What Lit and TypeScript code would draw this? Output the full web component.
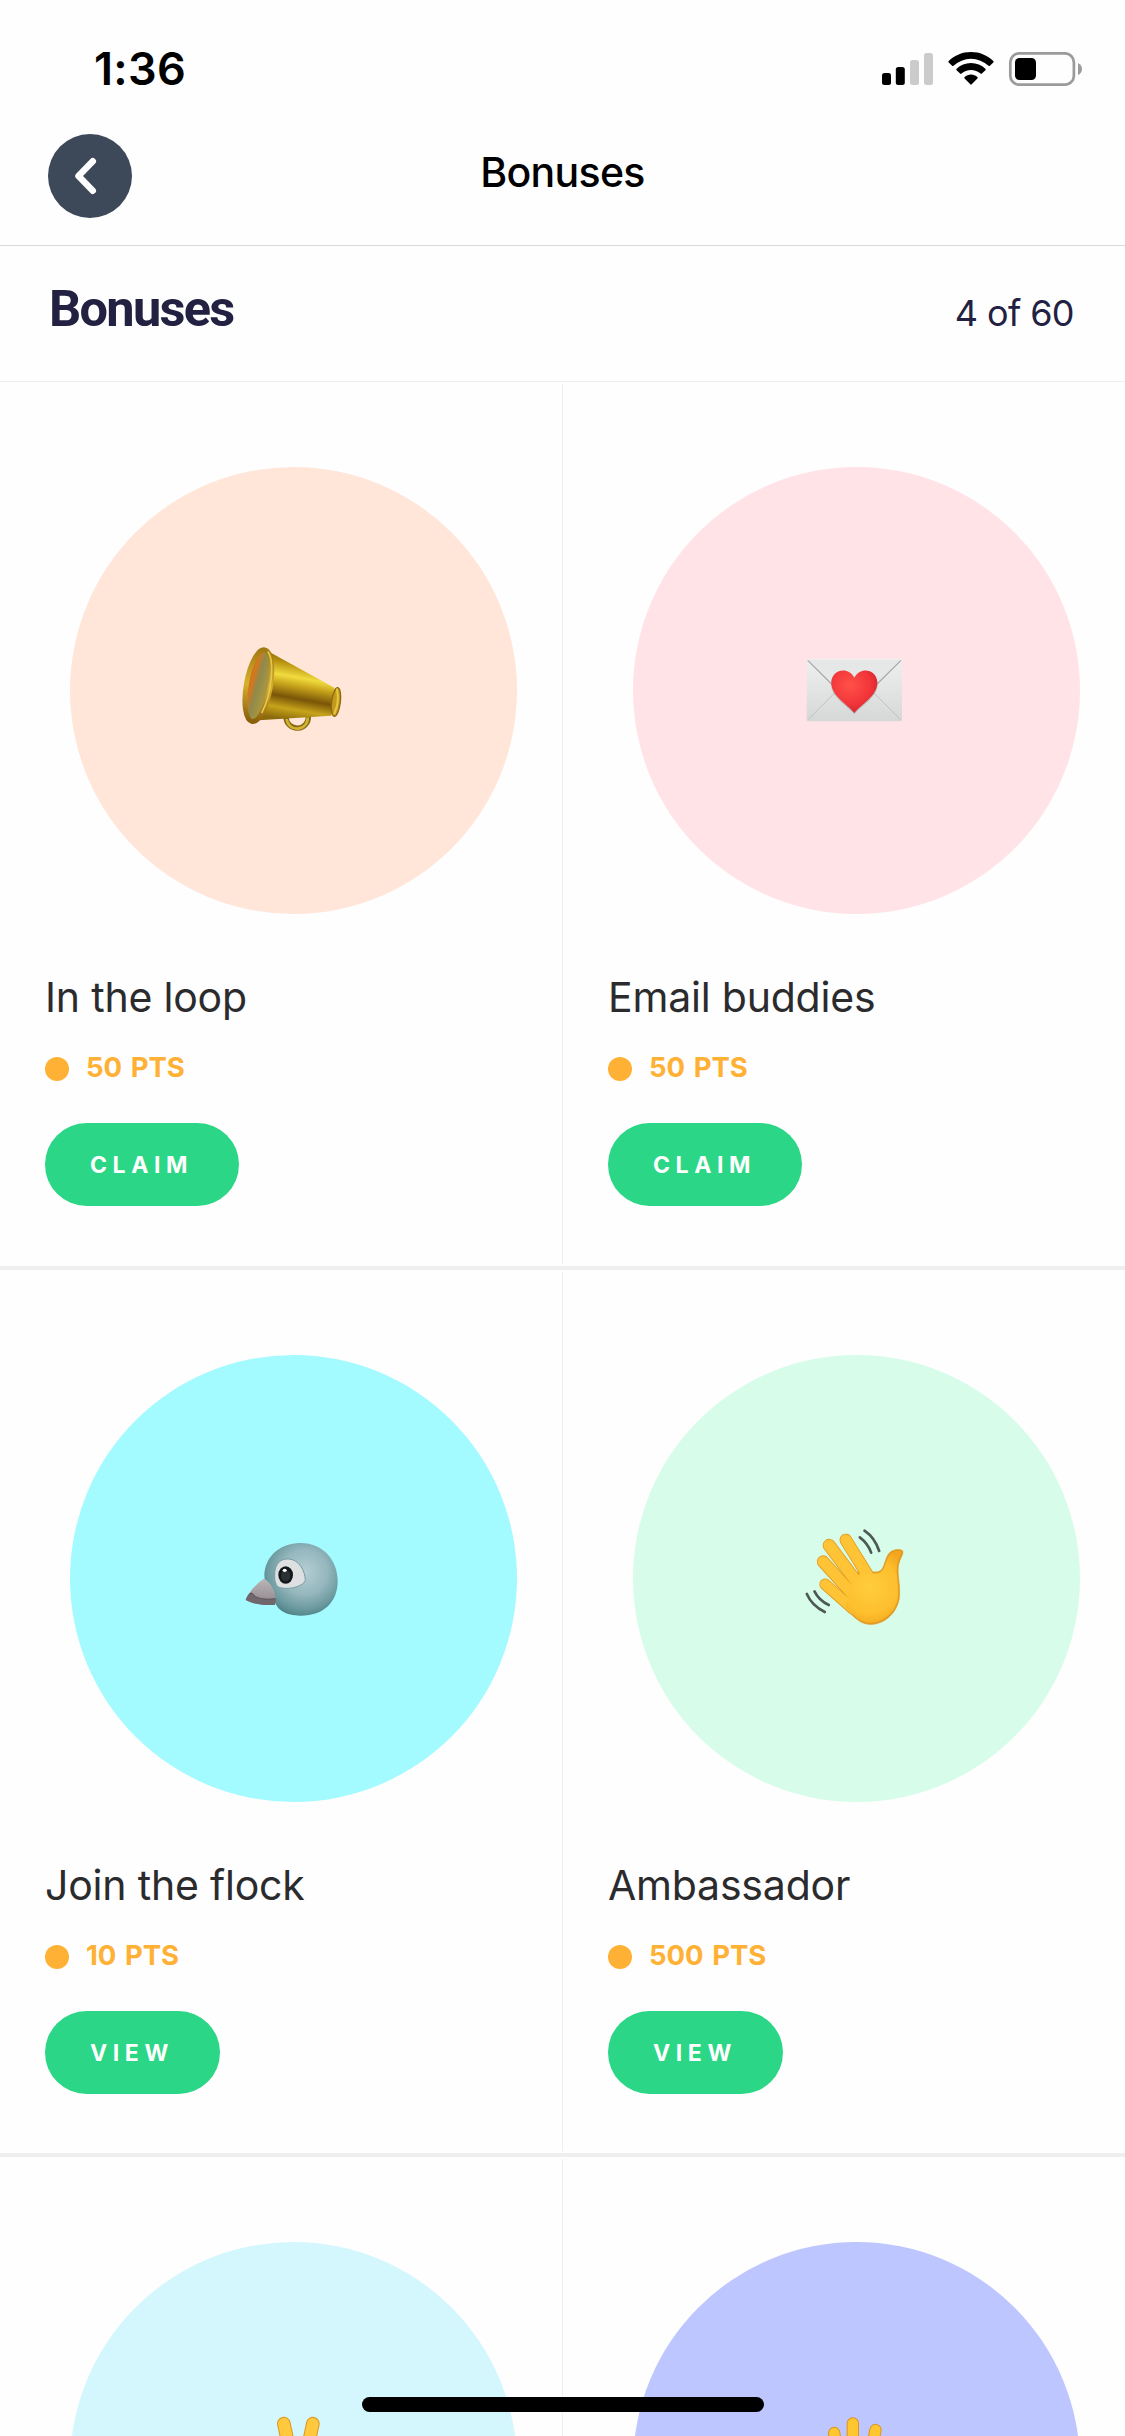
import { LitElement, html, svg, css } from "lit";
import { customElement, property } from "lit/decorators.js";

type IconName = "megaphone" | "letter" | "bird" | "wave" | "victory" | "raised";

interface Bonus {
  title: string;
  points: string;
  action: string;
  tone: string;
  icon: IconName;
}

const rows: Bonus[][] = [
  [
    { title: "In the loop", points: "50 PTS", action: "CLAIM", tone: "peach", icon: "megaphone" },
    { title: "Email buddies", points: "50 PTS", action: "CLAIM", tone: "pink", icon: "letter" },
  ],
  [
    { title: "Join the flock", points: "10 PTS", action: "VIEW", tone: "cyan", icon: "bird" },
    { title: "Ambassador", points: "500 PTS", action: "VIEW", tone: "mint", icon: "wave" },
  ],
  [
    { title: "", points: "", action: "", tone: "sky", icon: "victory" },
    { title: "", points: "", action: "", tone: "violet", icon: "raised" },
  ],
];

const palmShape = "M212 160C235 172 252 172 264 170C282 166 282 140 293 120C302 104 326 100 337 107C343 117 326 132 324 158C322 184 332 216 327 252C318 300 276 331 236 328C206 325 190 304 160 276L168 238L184 196Z";

const icons = {
  megaphone: {
    box: "10 -13 390 390",
    art: svg`
      <defs>
        <linearGradient id="cone" x1="0.6" y1="0" x2="0.4" y2="1">
          <stop offset="0" stop-color="#6f5206"/><stop offset=".2" stop-color="#b8920f"/>
          <stop offset=".38" stop-color="#f0dc3e"/><stop offset=".5" stop-color="#c9a51c"/>
          <stop offset=".68" stop-color="#7a5508"/><stop offset=".84" stop-color="#c7a41a"/>
          <stop offset="1" stop-color="#8c6a0c"/>
        </linearGradient>
        <linearGradient id="bell" x1="0" y1=".2" x2="1" y2=".5">
          <stop offset="0" stop-color="#a86c10"/><stop offset=".25" stop-color="#d9761c"/>
          <stop offset=".5" stop-color="#8f8a4a"/><stop offset="1" stop-color="#b49a3e"/>
        </linearGradient>
        <linearGradient id="rim" x1="0" y1="0" x2="0" y2="1">
          <stop offset="0" stop-color="#a27a12"/><stop offset=".5" stop-color="#d7b02c"/><stop offset="1" stop-color="#8a5f0c"/>
        </linearGradient>
      </defs>
      <path d="M181 262A32 32 0 0 0 248 258" fill="none" stroke="#85680e" stroke-width="16"/>
      <path d="M183 266A31 31 0 0 0 246 261" fill="none" stroke="#d2b235" stroke-width="8"/>
      <path d="M130 64L326 172Q340 215 316 256L100 270Z" fill="url(#cone)"/>
      <g transform="rotate(10 98 166)">
        <ellipse cx="98" cy="166" rx="36" ry="109" fill="url(#bell)" stroke="url(#rim)" stroke-width="15"/>
        <path d="M108 60A36 110 0 0 1 122 245" fill="none" stroke="#e6c74c" stroke-width="5"/>
      </g>
      <ellipse cx="331" cy="215" rx="13" ry="43" fill="#c39a1e" stroke="#8c6a10" stroke-width="4" transform="rotate(7 331 215)"/>
      <path d="M334 177Q342 215 326 250" fill="none" stroke="#e6c63d" stroke-width="6" stroke-linecap="round"/>`,
  },
  letter: {
    box: "7 -40 390 390",
    art: svg`
      <defs>
        <linearGradient id="paper" x1="0" y1="0" x2="0" y2="1">
          <stop offset="0" stop-color="#efefef"/><stop offset="1" stop-color="#d6d8d8"/>
        </linearGradient>
        <radialGradient id="heart" cx=".4" cy=".35" r=".75">
          <stop offset="0" stop-color="#ff5148"/><stop offset=".6" stop-color="#f2353a"/><stop offset="1" stop-color="#c92128"/>
        </radialGradient>
      </defs>
      <rect x="51" y="59" width="286" height="187" rx="3" fill="url(#paper)"/>
      <path d="M55 241L140 156M333 241L248 156" stroke="#bfc2c2" stroke-width="3"/>
      <path d="M54 62L150 158Q194 190 238 158L334 62Z" fill="#e6e7e7"/>
      <path d="M54 63L150 158M334 63L238 158" stroke="#a4a8a8" stroke-width="3.5"/>
      <path d="M194 225C176 201 122 174 124 132C126 91 176 83 194 119C212 83 262 91 264 132C266 174 212 201 194 225Z" fill="#8b8585" opacity=".45"/>
      <path d="M194 221C174 195 124 170 125 129C127 89 176 80 194 115C212 80 261 89 263 129C264 170 214 195 194 221Z" fill="url(#heart)"/>`,
  },
  bird: {
    box: "-3 -18 390 390",
    art: svg`
      <defs>
        <radialGradient id="head" cx=".55" cy=".4" r=".62">
          <stop offset="0" stop-color="#b5ced4"/><stop offset=".5" stop-color="#95b7bd"/>
          <stop offset=".82" stop-color="#6b9a9f"/><stop offset="1" stop-color="#4f8388"/>
        </radialGradient>
        <linearGradient id="beak" x1="0" y1="0" x2="0" y2="1">
          <stop offset="0" stop-color="#bbb6ba"/><stop offset="1" stop-color="#8d868a"/>
        </linearGradient>
      </defs>
      <path d="M210 69C277 68 322 119 323 180C324 247 281 287 212 287C169 287 135 271 132 232C121 211 103 193 103 166C105 108 151 70 210 69Z" fill="url(#head)"/>
      <path d="M103 176C82 187 57 215 47 240C65 251 98 256 134 255C143 222 127 192 103 176Z" fill="url(#beak)"/>
      <path d="M47 240C54 220 63 214 69 221C77 237 100 238 137 236C138 244 137 250 134 255C98 256 65 251 47 240Z" fill="#6f676b"/>
      <path d="M58 222Q68 215 74 229Q98 241 137 236" fill="none" stroke="#584f53" stroke-width="2.500"/>
      <path d="M134 161C135 129 154 115 177 117C207 119 226 153 226 182C216 203 167 211 145 201C135 193 133 177 134 161Z" fill="#dddfe0" stroke="#759da2" stroke-width="3"/>
      <ellipse cx="167" cy="165" rx="22" ry="26" fill="#141719"/>
      <ellipse cx="167" cy="167" rx="14" ry="17" fill="#2b3033"/>
      <ellipse cx="164" cy="151" rx="6" ry="5" fill="#fff"/>`,
  },
  wave: {
    box: "5.5 -3 390 390",
    art: svg`
      <defs>
        <radialGradient id="palm" gradientUnits="userSpaceOnUse" cx="240" cy="215" r="125">
          <stop offset="0" stop-color="#ffcd3d"/><stop offset=".65" stop-color="#fdbf2d"/><stop offset="1" stop-color="#f2a51f"/>
        </radialGradient>
      </defs>
      <g fill="none" stroke="#e29a1f" stroke-linecap="round">
        <path d="M167 75L235 185" stroke-width="38"/>
        <path d="M117 91L208 212" stroke-width="39"/>
        <path d="M99 140L195 246" stroke-width="38"/>
        <path d="M105 208L190 283" stroke-width="35"/>
      </g>
      <path d="${palmShape}" fill="#e29a1f" stroke="#e29a1f" stroke-width="2"/>
      <g fill="none" stroke="#ffc436" stroke-linecap="round">
        <path d="M167 75L235 185" stroke-width="33"/>
        <path d="M117 91L208 212" stroke-width="34"/>
        <path d="M99 140L195 246" stroke-width="33"/>
        <path d="M105 208L190 283" stroke-width="30"/>
      </g>
      <path d="M216 166C235 176 254 177 267 173C286 165 285 142 296 123C304 109 324 104 333 110C336 118 322 132 320 158C318 184 328 216 323 252C314 296 274 326 236 323C206 320 190 301 166 275L173 240L190 200Z" fill="url(#palm)"/>
      <g fill="none" stroke="#4e5956" stroke-width="8" stroke-linecap="round">
        <path d="M223 47Q254 68 267 108"/><path d="M209 67Q233 85 243 113"/>
        <path d="M50 237Q65 272 104 291"/><path d="M73 229Q86 256 116 270"/>
      </g>`,
  },
  victory: {
    box: "-34.5 63 390 390",
    art: svg`
      <g fill="none" stroke-linecap="round">
        <path d="M130 131L158 260" stroke="#dd951e" stroke-width="41"/>
        <path d="M217 131L190 260" stroke="#dd951e" stroke-width="41"/>
        <path d="M130 131L158 260" stroke="#ffc83d" stroke-width="35"/>
        <path d="M217 131L190 260" stroke="#ffc83d" stroke-width="35"/>
      </g>`,
  },
  raised: {
    box: "694.5 63 390 390",
    art: svg`
      <g fill="none" stroke-linecap="round">
        <path d="M821 159L838 260M877 130V260M945 150L924 260" stroke="#dd951e" stroke-width="37"/>
        <path d="M821 159L838 260M877 130V260M945 150L924 260" stroke="#ffc62f" stroke-width="31"/>
      </g>`,
  },
};

@customElement("bonus-card")
export class BonusCard extends LitElement {
  @property({ attribute: false }) bonus!: Bonus;

  static styles = css`
    :host { display: block; box-sizing: border-box; width: 562px; padding: 85px 45px 0; }
    .disc { display: flex; align-items: center; justify-content: center; width: 447px; height: 447px; margin-left: 25px; border-radius: 50%; }
    .peach { background: #ffe6d9; }
    .pink { background: #ffe3e7; }
    .cyan { background: #a3faff; }
    .mint { background: #d7fdea; }
    .sky { background: #d4f7fd; }
    .violet { background: #bdc6ff; }
    .icon { display: block; width: 130px; height: 130px; }
    .title { margin: 58px 0 0; height: 50px; line-height: 50px; font-size: 41px; font-weight: 400; letter-spacing: -0.2px; color: #2b2b2d; white-space: nowrap; }
    .points { display: flex; align-items: center; gap: 17px; height: 30px; margin-top: 30px; color: #ffb135; font-size: 27.5px; line-height: 30px; font-weight: 700; word-spacing: 2px; white-space: nowrap; }
    .dot { width: 24px; height: 24px; margin-top: 4px; border-radius: 50%; background: #ffb135; }
    .action { display: block; height: 83px; margin-top: 41px; padding: 1px 46px 0 45px; border: 0; border-radius: 42px; background: #2bd786; color: #fff; font: 700 23px/82px Inter, sans-serif; letter-spacing: 5.6px; }
  `;

  render() {
    const { title, points, action, tone, icon } = this.bonus;
    return html`
      <div class="disc ${tone}">
        <svg class="icon" viewBox=${icons[icon].box}>${icons[icon].art}</svg>
      </div>
      ${title
        ? html`<h2 class="title">${title}</h2>
            <div class="points"><span class="dot"></span><span>${points}</span></div>
            <button class="action">${action}</button>`
        : null}
    `;
  }
}

@customElement("app-root")
export class AppRoot extends LitElement {
  static styles = css`
    :host { display: block; position: relative; width: 1125px; height: 2436px; overflow: hidden; background: #fefefe; font-family: Inter, sans-serif; }
    .status { display: flex; align-items: center; justify-content: space-between; box-sizing: border-box; height: 134px; padding: 4px 41px 0 94px; }
    .time { font-size: 45px; line-height: 54px; font-weight: 600; letter-spacing: 0.3px; color: #000; }
    .indicators { display: block; width: 202px; height: 34px; }
    .nav { display: grid; grid-template-columns: 84px 1fr 84px; box-sizing: border-box; height: 112px; padding: 0 48px; border-bottom: 1px solid #d9d9d9; }
    .back { display: flex; width: 84px; height: 84px; padding: 0; border: 0; border-radius: 50%; background: #3d4859; }
    .chevron { width: 84px; height: 84px; }
    .page-name { text-align: center; font-size: 41px; line-height: 50px; height: 50px; margin-top: 13px; font-weight: 500; letter-spacing: -0.7px; color: #000; }
    .summary { display: flex; justify-content: space-between; box-sizing: border-box; height: 136px; padding: 0 51px 0 49px; border-bottom: 1px solid #eee; color: #232142; }
    .heading { margin: 33px 0 0; font-family: Roboto, sans-serif; font-size: 50.5px; line-height: 60px; font-weight: 700; letter-spacing: -1.7px; }
    .count { margin-top: 47px; font-size: 36px; line-height: 40px; letter-spacing: -0.6px; }
    .row { display: flex; box-sizing: border-box; height: 888px; border-bottom: 4px solid #efefef; }
    .row + .row { height: 887px; }
    .divider { width: 1px; margin: 2px 0; background: #efefef; }
    .home-bar { position: absolute; left: 362px; bottom: 24px; width: 402px; height: 15px; border-radius: 8px; background: #000; }
  `;

  render() {
    return html`
      <header>
        <div class="status">
          <span class="time">1:36</span>
          <svg class="indicators" viewBox="882 52 202 34">
            <rect x="882" y="73" width="9" height="12" rx="2.5"/>
            <rect x="895.8" y="67" width="9" height="18" rx="2.5"/>
            <rect x="910" y="60" width="9" height="25" rx="2.5" fill="#cbcbcb"/>
            <rect x="924" y="53" width="9" height="32" rx="2.5" fill="#cbcbcb"/>
            <path d="M971 52C979.700 52 987.600 55.400 993.300 60.900Q994 61.700 993.300 62.400L989.900 65.800Q989.200 66.400 988.500 65.800A25.500 25.500 0 0 0 953.500 65.800Q952.800 66.400 952.100 65.800L948.700 62.400Q948 61.700 948.700 60.900C954.400 55.400 962.300 52 971 52Z"/>
            <path d="M971 63C976.600 63 981.600 65.200 985.400 68.800Q986.100 69.500 985.400 70.200L981.900 73.600Q981.200 74.200 980.500 73.600A14.500 14.500 0 0 0 961.500 73.600Q960.800 74.200 960.100 73.600L956.600 70.200Q955.900 69.500 956.600 68.800C960.400 65.200 965.400 63 971 63Z"/>
            <path d="M971 74.600C973.500 74.600 975.700 75.500 977.400 77Q978.100 77.700 977.400 78.400L971.700 84.300Q971 85 970.300 84.300L964.600 78.400Q963.900 77.700 964.600 77C966.300 75.500 968.500 74.600 971 74.600Z"/>
            <rect x="1010.300" y="53.300" width="63.600" height="31.400" rx="9" fill="none" stroke="#9b9b9b" stroke-width="2.700"/>
            <rect x="1015" y="58" width="21" height="22" rx="4.500"/>
            <path d="M1078 63Q1082 65 1082 69T1078 75Z" fill="#9b9b9b"/>
          </svg>
        </div>
        <div class="nav">
          <button class="back" aria-label="Back">
            <svg class="chevron" viewBox="0 0 84 84" fill="none" stroke="#fff" stroke-width="6.500" stroke-linecap="round" stroke-linejoin="round"><path d="M44.800 27.300L30.500 42L44.800 56.700"/></svg>
          </button>
          <div class="page-name">Bonuses</div>
        </div>
      </header>
      <section class="summary">
        <h1 class="heading">Bonuses</h1>
        <span class="count">4 of 60</span>
      </section>
      <main>
        ${rows.map(
          ([left, right]) => html`<div class="row">
            <bonus-card .bonus=${left}></bonus-card>
            <div class="divider"></div>
            <bonus-card .bonus=${right}></bonus-card>
          </div>`
        )}
      </main>
      <div class="home-bar"></div>
    `;
  }
}
